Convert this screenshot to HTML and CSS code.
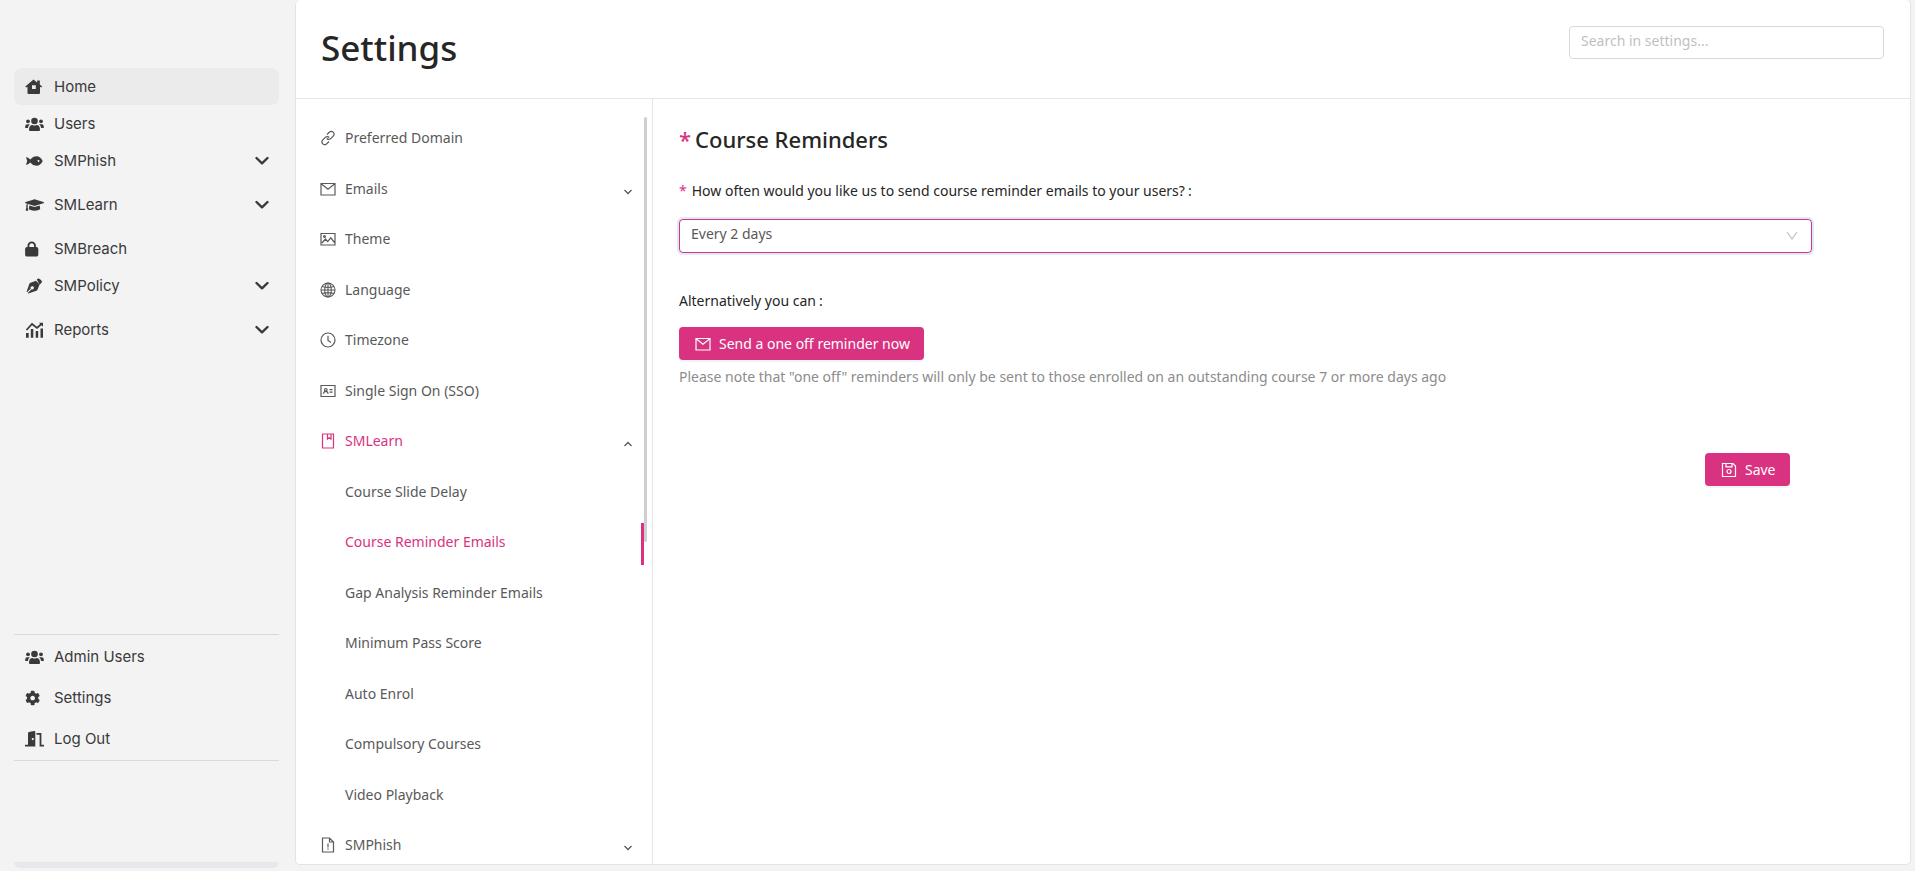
FILE: index.html
```html
<!DOCTYPE html>
<html lang="en">
<head>
<meta charset="utf-8">
<title>Settings</title>
<link rel="stylesheet" href="styles.css">
</head>
<body>
<svg class="defs" aria-hidden="true">
  <symbol id="users" viewBox="0 0 20 16">
    <circle cx="9.5" cy="5" r="3.3"/><circle cx="3" cy="5.3" r="1.9"/><circle cx="16" cy="5.3" r="1.9"/>
    <path d="M4 14q0-5 3.500-5q2 1 4 0q3.500 0 3.500 5q0 1-1 1h-9q-1 0-1-1zM.2 12v-1.500q0-2.300 2-2.300h1.600q.7 0 1.100.4q-1.700 1-2 3.400zM18.800 12v-1.500q0-2.300-2-2.300h-1.600q-.7 0-1.100.4q1.700 1 2 3.400z"/>
  </symbol>
  <symbol id="chevron" viewBox="0 0 14 10"><path d="M1.500 2l5.500 5.300l5.500-5.300" fill="none" stroke="currentColor" stroke-width="2.400" stroke-linecap="round" stroke-linejoin="round"/></symbol>
  <symbol id="arrow" viewBox="0 0 10 6"><path d="M1.500 1l3.500 3.500l3.500-3.500" fill="none" stroke="currentColor" stroke-width="1.300"/></symbol>
  <symbol id="mail" viewBox="0 0 16 16"><path d="M1 2.500h14v11.500h-14zM1.500 3l6.500 5.300l6.500-5.300" fill="none" stroke="currentColor" stroke-width="1.200"/></symbol>
</svg>
<div class="app">
  <nav class="sidebar" aria-label="Main">
    <div class="side-list">
      <a class="side-item current" href="#"><svg class="side-icon" viewBox="0 0 20 16"><path fill-rule="evenodd" d="M8.500 .5L.3 7.500l.9 1L2.500 7.700V14q0 1 1 1H14q1 0 1-1V7.700l1.200.9l.9-1L14.800 5.600V1.500H12.200V3.400zM7 6.200h3.800v3.800H7z"/></svg><span>Home</span></a>
      <a class="side-item" href="#"><svg class="side-icon"><use href="#users"/></svg><span>Users</span></a>
      <button class="side-item group"><svg class="side-icon" viewBox="0 0 20 16"><path fill-rule="evenodd" d="M1 4.300q1.500-.5 4.200 2.300Q8 3.200 11.500 3.200q4 0 6.200 4.800q-2.200 4.800-6.200 4.800Q8 12.800 5.200 9.400Q2.500 12.200 1 11.700L2.200 8zM13.500 7.100a.9.900 0 1 0 .01 0z"/></svg><span>SMPhish</span><svg class="side-chevron"><use href="#chevron"/></svg></button>
      <button class="side-item group"><svg class="side-icon" viewBox="0 -16 672 544"><path d="M622.340 153.200L343.400 67.500c-15.200-4.670-31.600-4.670-46.790 0L17.660 153.200c-23.540 7.230-23.540 38.360 0 45.590l48.630 14.940c-10.670 13.190-17.230 29.280-17.880 46.900C38.780 266.150 32 276.110 32 288c0 10.780 5.680 19.850 13.860 25.650L20.330 428.530C18.110 438.520 25.710 448 35.940 448h56.110c10.240 0 17.840-9.480 15.620-19.470L82.140 313.650C90.320 307.850 96 298.780 96 288c0-11.570-6.470-21.250-15.660-26.870.76-15.020 8.440-28.300 20.690-36.720L296.600 284.500c9.060 2.780 26.440 6.250 46.790 0l278.950-85.700c23.550-7.240 23.550-38.360 0-45.600zM352.790 315.090c-28.530 8.760-52.840 3.920-65.590 0l-145.020-44.550L128 384c0 35.350 85.960 64 192 64s192-28.650 192-64l-14.180-113.470-145.030 44.560z"/></svg><span>SMLearn</span><svg class="side-chevron"><use href="#chevron"/></svg></button>
      <a class="side-item" href="#"><svg class="side-icon" viewBox="0 -16 672 544"><path d="M144 144v48H304V144c0-44.200-35.800-80-80-80s-80 35.800-80 80zM80 192V144C80 64.500 144.500 0 224 0s144 64.500 144 144v48h16c35.300 0 64 28.700 64 64V448c0 35.300-28.700 64-64 64H64c-35.300 0-64-28.700-64-64V256c0-35.300 28.700-64 64-64H80z"/></svg><span>SMBreach</span></a>
      <button class="side-item group"><svg class="side-icon" viewBox="0 0 20 16"><path fill-rule="evenodd" d="M11.800 1.500q1.500-1.800 3-.5l1.600 1.600q1.300 1.500-.5 3l-1.400 1zM11 2.800l3.600 3.700l-2 5.100q-.3.900-1.200 1.200L3.300 15.500l-.5-.4L6.600 11.300a1.600 1.600 0 1 0-.8-.8L2 14.300l-.4-.6L4.300 6q.3-.9 1.200-1.200z"/></svg><span>SMPolicy</span><svg class="side-chevron"><use href="#chevron"/></svg></button>
      <button class="side-item group"><svg class="side-icon" viewBox="0 0 20 16"><path d="M1 11h2.700v4.800H1zM5.800 7h2.500v8.800H5.800zM10.700 9h2.500v6.800h-2.500zM15.500 6.500h2.500v9.300h-2.500z"/><path d="M1.500 8L7 2l5 4L16.500 2" fill="none" stroke="currentColor" stroke-width="1.700"/><path d="M14 .7h4v4z"/></svg><span>Reports</span><svg class="side-chevron"><use href="#chevron"/></svg></button>
    </div>
    <div class="side-list lower">
      <a class="side-item" href="#"><svg class="side-icon"><use href="#users"/></svg><span>Admin Users</span></a>
      <a class="side-item" href="#"><svg class="side-icon" viewBox="0 -16 672 544"><path d="M487.400 315.700l-42.600-24.600c4.300-23.200 4.300-47 0-70.200l42.600-24.600c4.900-2.800 7.100-8.600 5.500-14-11.100-35.600-30-67.800-54.700-94.600-3.800-4.100-10-5.100-14.800-2.300L380.800 110c-17.900-15.400-38.500-27.300-60.800-35.100V25.800c0-5.600-3.900-10.500-9.400-11.700-36.700-8.200-74.300-7.800-109.200 0-5.500 1.200-9.400 6.100-9.400 11.700V75c-22.200 7.900-42.800 19.800-60.800 35.100L88.700 85.500c-4.900-2.800-11-1.900-14.800 2.300-24.700 26.700-43.600 58.900-54.700 94.600-1.700 5.400.6 11.200 5.500 14L67.300 221c-4.300 23.200-4.300 47 0 70.200l-42.600 24.600c-4.900 2.800-7.100 8.600-5.500 14 11.100 35.600 30 67.800 54.700 94.600 3.800 4.100 10 5.100 14.800 2.300l42.600-24.600c17.900 15.400 38.500 27.300 60.800 35.100v49.200c0 5.600 3.900 10.500 9.400 11.700 36.700 8.200 74.300 7.800 109.200 0 5.500-1.200 9.400-6.100 9.400-11.700v-49.200c22.200-7.900 42.800-19.800 60.800-35.100l42.600 24.600c4.900 2.800 11 1.900 14.800-2.300 24.700-26.700 43.600-58.900 54.700-94.600 1.500-5.500-.7-11.300-5.600-14.100zM256 336c-44.100 0-80-35.900-80-80s35.900-80 80-80 80 35.900 80 80-35.900 80-80 80z"/></svg><span>Settings</span></a>
      <a class="side-item" href="#"><svg class="side-icon" viewBox="0 0 20 16"><path fill-rule="evenodd" d="M0 13.800h3V2.200q0-.9.900-1.200L9 .1q1.300-.2 1.300 1V15.500H0zM7.800 7a1 1 0 1 0 .01 0z"/><path d="M11.500 2.900h4V14.600h3.500" fill="none" stroke="currentColor" stroke-width="1.800"/></svg><span>Log Out</span></a>
    </div>
    <div class="side-foot"></div>
  </nav>

  <main class="card">
    <header class="top">
      <h1>Settings</h1>
      <input class="search" type="text" placeholder="Search in settings..." aria-label="Search in settings">
    </header>
    <div class="columns">
      <nav class="menu" aria-label="Settings">
        <div class="menu-list">
          <a class="menu-item" href="#"><svg class="icon" viewBox="0 0 16 16"><g fill="none" stroke="currentColor" stroke-width="1.200"><path d="M7 4.500L9.500 2q2-1.500 3.700.2t.2 3.700L10.500 8.800q-2 1.500-3.700-.3"/><path d="M9 11.500L6.500 14q-2 1.500-3.700-.2t-.2-3.700L5.500 7.200q2-1.500 3.700.3"/></g></svg><span>Preferred Domain</span></a>
          <button class="menu-item"><svg class="icon"><use href="#mail"/></svg><span>Emails</span><svg class="arrow"><use href="#arrow"/></svg></button>
          <a class="menu-item" href="#"><svg class="icon" viewBox="0 0 16 16"><g fill="none" stroke="currentColor" stroke-width="1.200"><path d="M1 2.500h14v11.500h-14zM2 12l3.500-4l2.200 2.600l3-3.800l3.800 4.700"/><circle cx="4.500" cy="5.500" r=".9"/></g></svg><span>Theme</span></a>
          <a class="menu-item" href="#"><svg class="icon" viewBox="0 0 16 16"><g fill="none" stroke="currentColor" stroke-width="1.100"><circle cx="8" cy="8" r="7"/><ellipse cx="8" cy="8" rx="3.300" ry="7"/><path d="M8 1v14M1 8h14M2.200 4.500q5.800 1.800 11.600 0M2.200 11.500q5.800-1.800 11.600 0"/></g></svg><span>Language</span></a>
          <a class="menu-item" href="#"><svg class="icon" viewBox="0 0 16 16"><g fill="none" stroke="currentColor" stroke-width="1.200"><circle cx="8" cy="8" r="7"/><path d="M8 3.700v4.800l3 2"/></g></svg><span>Timezone</span></a>
          <a class="menu-item" href="#"><svg class="icon" viewBox="0 0 16 16"><g fill="none" stroke="currentColor" stroke-width="1.200"><path d="M1 2.500h14v11h-14zM9.500 6.700h3M9.500 9.200h3"/><circle cx="5.800" cy="6.800" r="1.300"/><path d="M3.500 10.700q.3-2.400 2.300-2.400t2.300 2.400"/></g></svg><span>Single Sign On (SSO)</span></a>
          <button class="menu-item open"><svg class="icon" viewBox="0 0 16 16"><path d="M2.500 1h11v14h-11zM7.500 1v5l1.700-1.300L11 6V1" fill="none" stroke="currentColor" stroke-width="1.200"/></svg><span>SMLearn</span><svg class="arrow up"><use href="#arrow"/></svg></button>
          <a class="menu-item sub" href="#">Course Slide Delay</a>
          <a class="menu-item sub selected" href="#">Course Reminder Emails</a>
          <a class="menu-item sub" href="#">Gap Analysis Reminder Emails</a>
          <a class="menu-item sub" href="#">Minimum Pass Score</a>
          <a class="menu-item sub" href="#">Auto Enrol</a>
          <a class="menu-item sub" href="#">Compulsory Courses</a>
          <a class="menu-item sub" href="#">Video Playback</a>
          <button class="menu-item"><svg class="icon" viewBox="0 0 16 16"><path d="M2.500 1h7l4 4v10h-11zM9.500 1v4h4M8 6.500v4M8 11.500v1.300" fill="none" stroke="currentColor" stroke-width="1.200"/></svg><span>SMPhish</span><svg class="arrow"><use href="#arrow"/></svg></button>
        </div>
        <div class="scroll"></div>
      </nav>

      <form class="panel">
        <h2><span class="star">*</span>Course Reminders</h2>
        <label class="label" for="frequency"><span class="star">*</span><span>How often would you like us to send course reminder emails to your users?</span><span>:</span></label>
        <div class="picker">
          <select id="frequency"><option>Every 2 days</option></select>
          <svg class="picker-arrow" viewBox="0 0 12 10"><path d="M1 1l5 7l5-7" fill="none" stroke="currentColor" stroke-width="1.200"/></svg>
        </div>
        <p class="label"><span>Alternatively you can</span><span>:</span></p>
        <button class="button" type="button"><svg class="button-icon"><use href="#mail"/></svg>Send a one off reminder now</button>
        <p class="note">Please note that "one off" reminders will only be sent to those enrolled on an outstanding course 7 or more days ago</p>
        <div class="actions">
          <button class="button" type="submit"><svg class="button-icon" viewBox="0 0 16 16"><g fill="none" stroke="currentColor" stroke-width="1.200"><path d="M1.500 1.500h10.500l2.500 2.500v10.500h-13zM5 1.500v3.300h6V1.500"/><circle cx="8" cy="9.500" r="2"/></g></svg>Save</button>
        </div>
      </form>
    </div>
  </main>
</div>
</body>
</html>
```
FILE: styles.css
```css
* { box-sizing: border-box; }
body { margin: 0; background: #f3f3f3; font: 14px/22px "Noto Sans", "Open Sans", sans-serif; color: #262626; }
h1, h2 { margin: 0; font-weight: 500; }
p { margin: 0; }
a { color: inherit; text-decoration: none; }
button, input, select { font: inherit; color: inherit; }
button { border: 0; background: none; text-align: left; cursor: pointer; }
.defs { display: none; }
.app { display: flex; height: 100vh; overflow: hidden; }

.sidebar { flex: none; width: 295px; padding: 68px 16px 3px 14px; display: flex; flex-direction: column; font: 15px/20px Inter, sans-serif; color: #3a3a3a; }
.side-list { display: flex; flex-direction: column; }
.side-item { display: flex; align-items: center; height: 37px; padding: 0 10px 0 11px; border-radius: 8px; }
.side-item.current { background: #ebebeb; }
.side-item.group { margin-bottom: 7px; }
.side-icon { flex: none; width: 20px; height: 16px; margin-right: 9px; fill: currentColor; }
.side-chevron { width: 14px; height: 10px; margin-left: auto; }
.lower { margin-top: 279px; padding: 1px 0; border-top: 1px solid #d9d9d9; border-bottom: 1px solid #d9d9d9; }
.lower .side-item { height: 41px; }
.side-foot { height: 6px; margin-top: auto; border-radius: 0 0 8px 8px; background: #e8e8ec; }

.card { flex: 1; min-width: 0; margin: 0 4px 6px 0; display: flex; flex-direction: column; background: #fff; border: 1px solid #e3e3e3; border-top: 0; border-radius: 5px; }
.top { display: flex; justify-content: space-between; align-items: flex-start; height: 99px; padding: 26px 26px 26px 25px; border-bottom: 1px solid #e6e6e6; }
h1 { font-size: 35px; line-height: 44px; }
.search { width: 315px; height: 33px; padding: 0 11px 4px; border: 1px solid #d9d9d9; border-radius: 4px; }
.search::placeholder { color: #bfbfbf; opacity: 1; }
.columns { flex: 1; min-height: 0; display: flex; }

.menu { flex: none; width: 357px; padding: 18px 5px 0 0; display: flex; border-right: 1px solid #e6e6e6; color: #595959; overflow: hidden; }
.menu-list { flex: 1; min-width: 0; padding-top: 2px; }
.menu-item { display: flex; align-items: center; width: 100%; height: 42px; margin-bottom: 8px; padding: 0 11px 4px 24px; }
.menu-item:nth-child(odd) { margin-bottom: 9px; }
.menu-item.sub { padding-left: 49px; }
.menu-item.open { color: #d93280; }
.menu-item.selected { color: #d93280; border-right: 3px solid #d93280; }
.icon { flex: none; width: 16px; height: 16px; margin-right: 9px; }
.arrow { width: 10px; height: 6px; margin: 5px 0 0 auto; color: #595959; }
.arrow.up { transform: rotate(180deg); }
.scroll { width: 3px; height: 425px; border-radius: 2px; background: #cfcfcf; }

.panel { flex: 1; min-width: 0; padding: 24px 0 24px 26px; }
h2 { font-size: 22px; line-height: 32px; }
.star { color: #d93280; }
h2 .star { margin-right: 4px; }
.label { display: flex; gap: 3px; margin-top: 25px; line-height: 22px; }
.label .star { margin-right: 2px; }
.picker { width: 92%; margin-top: 17px; position: relative; }
.picker select { display: block; width: 100%; height: 34px; padding: 0 11px 4px; appearance: none; color: #595959; background: #fff; border: 1px solid #d93280; border-radius: 4px; box-shadow: 0 0 0 2px #dcebfa; }
.picker-arrow { position: absolute; right: 14px; top: 12px; width: 12px; height: 10px; color: #bfbfbf; }
.picker + .label { margin-top: 37px; }
.button { display: inline-flex; align-items: center; gap: 8px; height: 33px; padding: 0 14px 0 16px; border-radius: 4px; background: #d93280; color: #fff; box-shadow: 0 2px 0 #f4f4f4; }
.button-icon { width: 16px; height: 16px; }
.label + .button { margin-top: 15px; }
.note { margin-top: 6px; color: #8c8c8c; }
.actions { width: 92%; padding-right: 22px; margin-top: 65px; display: flex; justify-content: flex-end; }
```
